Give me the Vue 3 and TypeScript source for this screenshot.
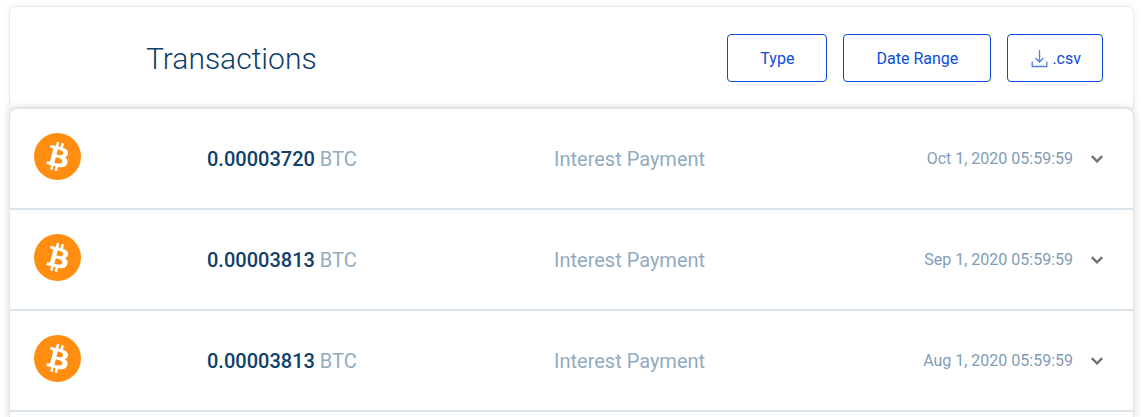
<script setup lang="ts">
interface Transaction {
  amount: string
  currency: string
  kind: string
  date: string
}

const transactions: Transaction[] = [
  { amount: '0.00003720', currency: 'BTC', kind: 'Interest Payment', date: 'Oct 1, 2020 05:59:59' },
  { amount: '0.00003813', currency: 'BTC', kind: 'Interest Payment', date: 'Sep 1, 2020 05:59:59' },
  { amount: '0.00003813', currency: 'BTC', kind: 'Interest Payment', date: 'Aug 1, 2020 05:59:59' },
]
</script>

<template>
  <main class="page">
    <header class="head">
      <h1>Transactions</h1>
      <div class="filters">
        <button type="button" class="btn">Type</button>
        <button type="button" class="btn range">Date Range</button>
        <button type="button" class="btn compact">
          <svg width="18" height="18" viewBox="0 0 18 18" fill="none" stroke="currentColor" stroke-width="1.3" aria-hidden="true">
            <path d="M8.5 0v12M4.5 8l4 4 4-4M1.2 11.5v5h14.6v-5" />
          </svg>
          <span>.csv</span>
        </button>
      </div>
    </header>
    <ul class="list">
      <li v-for="tx in transactions" :key="tx.date" class="row">
        <svg class="coin" viewBox="0 0 32 32" role="img" aria-label="Bitcoin">
          <circle cx="16" cy="16" r="16" fill="#ff8d0f" />
          <path
            fill="#fff"
            d="M23.189 14.02c.314-2.096-1.283-3.223-3.465-3.975l.708-2.84-1.728-.43-.69 2.765c-.454-.114-.92-.22-1.385-.326l.695-2.783L15.596 6l-.708 2.839c-.376-.086-.746-.17-1.104-.26l.002-.009-2.384-.595-.46 1.846s1.283.294 1.256.312c.7.175.826.638.805 1.006l-.806 3.235c.048.012.11.03.18.057l-.183-.045-1.13 4.532c-.086.212-.303.531-.793.41.018.025-1.256-.313-1.256-.313l-.858 1.978 2.25.561c.418.105.828.215 1.231.318l-.715 2.872 1.727.43.708-2.84c.472.127.93.245 1.378.357l-.706 2.828 1.728.43.715-2.866c2.948.558 5.164.333 6.097-2.333.752-2.146-.037-3.385-1.588-4.192 1.13-.26 1.98-1.003 2.207-2.538zm-3.95 5.538c-.533 2.147-4.148.986-5.32.695l.95-3.805c1.172.293 4.929.872 4.37 3.11zm.535-5.569c-.487 1.953-3.495.96-4.47.717l.86-3.45c.975.243 4.118.696 3.61 2.733z"
          />
        </svg>
        <span class="amount"><strong>{{ tx.amount }}</strong> {{ tx.currency }}</span>
        <span class="kind">{{ tx.kind }}</span>
        <time class="date">{{ tx.date }}</time>
        <button type="button" class="toggle" aria-label="Show details">
          <svg width="12" height="8" viewBox="0 0 12 8" fill="none" stroke="#707070" stroke-width="2.3" aria-hidden="true">
            <path d="M.8 1.1 6 6.3l5.2-5.2" />
          </svg>
        </button>
      </li>
    </ul>
  </main>
</template>

<style>
body {
  background: #fff;
}
</style>

<style scoped>
.page {
  display: flex;
  flex-direction: column;
  box-sizing: border-box;
  min-height: 100vh;
  padding: 6px 7px 0 9px;
  font-family: Roboto, "Liberation Sans", sans-serif;
}
.head {
  display: flex;
  align-items: center;
  justify-content: space-between;
  box-sizing: border-box;
  height: 101px;
  padding: 2px 30px 0 136px;
  border: 1px solid #e6eaf2;
  border-bottom: 0;
  border-radius: 6px 6px 0 0;
  box-shadow: 0 1px 8px rgba(0, 0, 0, 0.07);
}
h1 {
  margin: 0;
  padding-top: 2px;
  font-size: 30px;
  line-height: 40px;
  font-weight: 300;
  color: #0f4069;
}
.filters {
  display: flex;
  gap: 16px;
}
.btn {
  display: flex;
  align-items: center;
  justify-content: center;
  gap: 3px;
  box-sizing: border-box;
  height: 48px;
  padding: 2px 32px 0;
  border: 1px solid #0a4be0;
  border-radius: 4px;
  background: #fff;
  color: #0a4be0;
  font: 400 16px/24px Roboto, "Liberation Sans", sans-serif;
}
.range {
  min-width: 148px;
}
.compact {
  padding: 2px 21px 0 23px;
}
.compact svg {
  opacity: 0.7;
}
.list {
  position: relative;
  flex: 1;
  margin: 0;
  padding: 0;
  list-style: none;
  background: #fff;
  border: 1px solid #dde4ea;
  border-top-width: 2px;
  border-bottom: 0;
  border-radius: 8px 8px 0 0;
  box-shadow: 0 1px 10px rgba(0, 0, 0, 0.16);
}
.row {
  display: grid;
  grid-template-columns: 173px 347fr 361fr 158px 30px;
  align-items: center;
  height: 99px;
  padding: 0 30px 0 24px;
  border-bottom: 2px solid #dbe4eb;
}
.coin {
  width: 47px;
  height: 47px;
  margin-bottom: 4px;
}
.amount,
.kind {
  font-size: 20px;
  line-height: 28px;
  color: #93abc1;
  white-space: nowrap;
}
.amount strong {
  font-weight: 500;
  color: #0f4069;
}
.date {
  font-size: 16px;
  line-height: 24px;
  color: #7f9cb7;
  text-align: right;
  white-space: nowrap;
}
.toggle {
  display: flex;
  justify-content: flex-end;
  padding: 0;
  border: 0;
  background: none;
}
</style>
